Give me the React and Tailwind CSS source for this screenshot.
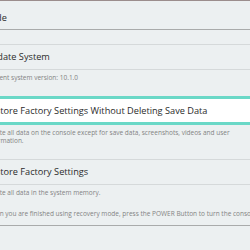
const items = [
  {
    title: "Update System",
    desc: ["Current system version: 10.1.0"],
  },
  {
    title: "Restore Factory Settings Without Deleting Save Data",
    desc: [
      "Delete all data on the console except for save data, screenshots, videos and user",
      "information.",
    ],
    selected: true,
  },
  {
    title: "Restore Factory Settings",
    desc: ["Delete all data in the system memory."],
    last: true,
  },
];

function Item({ title, desc, selected, last }) {
  return (
    <div>
      <div
        className={
          selected
            ? "h-[29px] flex items-center bg-white border-y-[3px] border-[#6ad8c7]"
            : "h-[26px] flex items-center border-y border-[#d5d9da]"
        }
      >
        <span className="ml-[-15px] text-[9.2px] text-[#2b2b2b] whitespace-nowrap">
          {title}
        </span>
      </div>
      <div className={last ? "pt-[4px] pb-[9px]" : "pt-[4px] pb-[14px]"}>
        {desc.map((d) => (
          <div
            key={d}
            className="ml-[-14px] text-[6.5px] leading-[8px] text-[#838383] whitespace-nowrap"
          >
            {d}
          </div>
        ))}
      </div>
    </div>
  );
}

export default function App() {
  return (
    <div
      className="w-[250px] h-[250px] overflow-hidden bg-[#ecf0f1] border-t border-[#9b8d8d]"
      style={{ fontFamily: '"Open Sans", "Noto Sans", sans-serif' }}
    >
      <div className="h-[29px] flex items-center pt-[6px] border-b border-[#a9abab]">
        <span className="ml-[-59px] text-[9.2px] text-[#2b2b2b] whitespace-nowrap">
          Recovery Mode
        </span>
      </div>
      <div className="pt-[14px]">
        {items.map((it) => (
          <Item key={it.title} {...it} />
        ))}
      </div>
      <div className="pt-[3px] pb-[7px] border-b border-[#a9abab]">
        <div className="ml-[-14px] text-[6.5px] leading-[9px] text-[#838383] whitespace-nowrap">
          When you are finished using recovery mode, press the POWER Button to turn the console off.
        </div>
      </div>
    </div>
  );
}
